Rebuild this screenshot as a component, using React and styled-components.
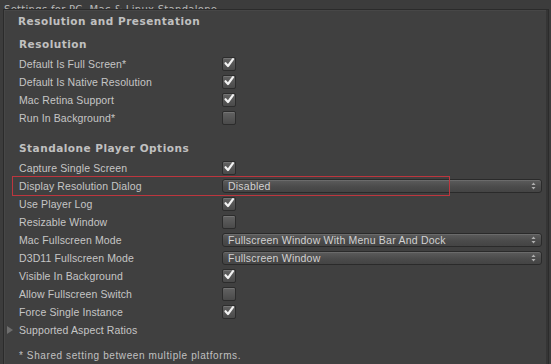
import React from "react";
import styled, { createGlobalStyle } from "styled-components";

const Global = createGlobalStyle`
  html, body { margin: 0; padding: 0; background: #3c3c3c; }
  body { font-family: "Liberation Sans", Arial, sans-serif; overflow: hidden; }
  #root { width: 551px; height: 364px; overflow: hidden; }
`;

const Page = styled.div`
  width: 551px;
  height: 364px;
  overflow: hidden;
  background: #3c3c3c;
`;

const TopCaption = styled.div`
  height: 9px;
  overflow: hidden;
  display: flex;
  align-items: flex-end;
  padding-left: 4px;
  span {
    display: block;
    font-family: "DejaVu Sans", sans-serif;
    font-size: 10px;
    line-height: 12px;
    margin-bottom: -7px;
    color: #b8b8b8;
    letter-spacing: 0.3px;
  }
`;

const Panel = styled.div`
  margin-left: 3px;
  margin-right: 2px;
  border-top: 1px solid #2b2b2b;
  border-left: 1px solid #2b2b2b;
  border-right: 1px solid #2b2b2b;
  box-shadow: inset -2px 0 0 #353535, inset 1px 1px 0 #474747;
  background: #404040;
  padding: 2px 3px 0 14px;
  height: 400px;
`;

const Title = styled.div`
  height: 18px;
  line-height: 18px;
  font-family: "DejaVu Sans", sans-serif;
  font-size: 10.5px;
  font-weight: bold;
  color: #c0c0c0;
  letter-spacing: 0.5px;
  margin-bottom: ${(p) => p.$gap || 0}px;
  margin-top: ${(p) => p.$top || 0}px;
  padding-left: ${(p) => p.$indent || 0}px;
`;

const Row = styled.div`
  position: relative;
  display: flex;
  align-items: center;
  height: 18px;
`;

const Label = styled.div`
  width: 204px;
  flex: none;
  padding-left: 1px;
  box-sizing: border-box;
  font-size: 10.5px;
  color: #c6c6c6;
  letter-spacing: 0.12px;
  white-space: nowrap;
`;

const Box = styled.div`
  width: 12px;
  height: 12px;
  border: 1px solid #2c2c2c;
  border-radius: 2px;
  background: linear-gradient(#626262, #4a4a4a);
  box-shadow: inset 0 1px 0 rgba(255,255,255,0.12);
  position: relative;
  svg { position: absolute; left: 0; top: -1px; }
`;

const Select = styled.div`
  width: 320px;
  height: 14px;
  box-sizing: border-box;
  border: 1px solid #2a2a2a;
  border-radius: 3px;
  background: linear-gradient(#5c5c5c, #4a4a4a 60%, #444444);
  box-shadow: inset 0 1px 0 rgba(255,255,255,0.1);
  display: flex;
  align-items: center;
  justify-content: space-between;
  padding: 0 5px 0 5px;
  font-size: 10.5px;
  color: #d2d2d2;
  letter-spacing: 0.22px;
  line-height: 12px;
`;

const Highlight = styled.div`
  position: absolute;
  left: -6px;
  top: -1px;
  width: 438px;
  height: 20px;
  box-sizing: border-box;
  border: 1px solid #bd363e;
  pointer-events: none;
`;

const Foldout = styled.div`
  position: absolute;
  left: -11px;
  top: 5px;
  width: 0;
  height: 0;
  border-top: 4px solid transparent;
  border-bottom: 4px solid transparent;
  border-left: 6px solid #6e6e6e;
`;

const Footnote = styled.div`
  margin-top: 8px;
  height: 18px;
  line-height: 18px;
  font-size: 10px;
  color: #c0c0c0;
  letter-spacing: 0.6px;
  padding-left: 1px;
`;

const Check = ({ on }) => (
  <Box>
    {on && (
      <svg width="12" height="12" viewBox="0 0 12 12">
        <path d="M2.5 6.2 L5 9 L10 2.2" fill="none" stroke="#f2f2f2" strokeWidth="2.2" strokeLinecap="round" strokeLinejoin="round" />
      </svg>
    )}
  </Box>
);

const Arrows = () => (
  <svg width="5" height="8" viewBox="0 0 5 8">
    <path d="M2.5 0.5 L4.5 3 L0.5 3 Z" fill="#b0b0b0" />
    <path d="M2.5 7.5 L4.5 5 L0.5 5 Z" fill="#b0b0b0" />
  </svg>
);

const Dropdown = ({ value }) => (
  <Select>
    <span>{value}</span>
    <Arrows />
  </Select>
);

const resolution = [
  ["Default Is Full Screen*", true],
  ["Default Is Native Resolution", true],
  ["Mac Retina Support", true],
  ["Run In Background*", false],
];

export default function App() {
  return (
    <Page>
      <Global />
      <TopCaption><span>Settings for PC, Mac &amp; Linux Standalone</span></TopCaption>
      <Panel>
        <Title $gap={5}>Resolution and Presentation</Title>
        <Title $gap={2} $indent={1}>Resolution</Title>
        {resolution.map(([l, v]) => (
          <Row key={l}><Label>{l}</Label><Check on={v} /></Row>
        ))}
        <Title $top={12} $gap={2} $indent={1}>Standalone Player Options</Title>
        <Row><Label>Capture Single Screen</Label><Check on /></Row>
        <Row>
          <Label>Display Resolution Dialog</Label>
          <Dropdown value="Disabled" />
          <Highlight />
        </Row>
        <Row><Label>Use Player Log</Label><Check on /></Row>
        <Row><Label>Resizable Window</Label><Check on={false} /></Row>
        <Row><Label>Mac Fullscreen Mode</Label><Dropdown value="Fullscreen Window With Menu Bar And Dock" /></Row>
        <Row><Label>D3D11 Fullscreen Mode</Label><Dropdown value="Fullscreen Window" /></Row>
        <Row><Label>Visible In Background</Label><Check on /></Row>
        <Row><Label>Allow Fullscreen Switch</Label><Check on={false} /></Row>
        <Row><Label>Force Single Instance</Label><Check on /></Row>
        <Row><Foldout /><Label>Supported Aspect Ratios</Label></Row>
        <Footnote>* Shared setting between multiple platforms.</Footnote>
      </Panel>
    </Page>
  );
}
